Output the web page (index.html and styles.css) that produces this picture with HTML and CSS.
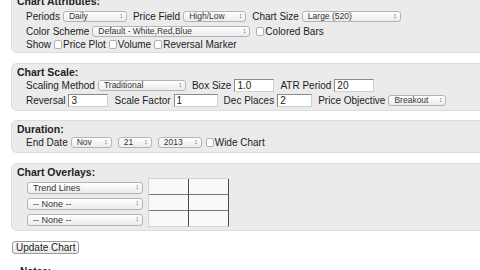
FILE: index.html
```html
<html>
    <head>
        <link rel="stylesheet" href="styles.css">
    </head>
    <body>
        <div id="page">
            <div class="box first">
                <h3>Chart Attributes:</h3>
                <div class="row">
                    <label>Periods</label>
                    <span class="sel w64"><select><option>Daily</option></select></span>
                    <label>Price Field</label>
                    <span class="sel w63"><select><option>High/Low</option></select></span>
                    <label>Chart Size</label>
                    <span class="sel w99"><select><option>Large (520)</option></select></span>
                </div>
                <div class="row">
                    <label>Color Scheme</label>
                    <span class="sel w158"><select><option>Default - White,Red,Blue</option></select></span>
                    <span class="chk"></span><label>Colored Bars</label>
                </div>
                <div class="row short">
                    <label>Show</label>
                    <span class="chk"></span><label>Price Plot</label>
                    <span class="chk"></span><label>Volume</label>
                    <span class="chk"></span><label>Reversal Marker</label>
                </div>
            </div>

            <div class="box">
                <h3>Chart Scale:</h3>
                <div class="row">
                    <label>Scaling Method</label>
                    <span class="sel w88"><select><option>Traditional</option></select></span>
                    <label>Box Size</label>
                    <input class="txt w40" type="text" value="1.0">
                    <label>ATR Period</label>
                    <input class="txt w40" type="text" value="20">
                </div>
                <div class="row">
                    <label>Reversal</label>
                    <input class="txt w40" type="text" value="3">
                    <label>Scale Factor</label>
                    <input class="txt w44" type="text" value="1">
                    <label>Dec Places</label>
                    <input class="txt w35" type="text" value="2">
                    <label>Price Objective</label>
                    <span class="sel w58"><select><option>Breakout</option></select></span>
                </div>
            </div>

            <div class="box spaced">
                <h3>Duration:</h3>
                <div class="row">
                    <label>End Date</label>
                    <span class="sel w41"><select><option>Nov</option></select></span>
                    <span class="sel w34"><select><option>21</option></select></span>
                    <span class="sel w44 tight"><select><option>2013</option></select></span>
                    <span class="chk"></span><label>Wide Chart</label>
                </div>
            </div>

            <div class="box">
                <h3>Chart Overlays:</h3>
                <div class="overlays">
                    <div class="ov-list">
                        <div class="ov-row"><span class="sel w116"><select><option>Trend Lines</option></select></span></div>
                        <div class="ov-row"><span class="sel w116"><select><option>-- None --</option></select></span></div>
                        <div class="ov-row"><span class="sel w116"><select><option>-- None --</option></select></span></div>
                    </div>
                    <div class="ov-grid">
                        <input type="text"><input type="text">
                        <input type="text"><input type="text">
                        <input type="text"><input type="text">
                    </div>
                </div>
            </div>

            <button class="update">Update Chart</button>
            <h4 class="notes">Notes:</h4>
        </div>
    </body>
</html>
```

FILE: styles.css
```css
body{
    margin: 0;
    background: #fff;
    overflow: hidden;
    font-family: "Liberation Sans", Arial, sans-serif;
    font-size: 10px;
    color: #222;
}
#page{
    padding-left: 11px;
    width: 620px;
}
.box{
    background: #ebebeb;
    border: solid 1px #dcdcdc;
    border-radius: 6px;
    padding: 2px 5px 2px;
    margin-bottom: 9px;
}
.box.first{
    margin-top: -8px;
    margin-bottom: 10px;
}
.box.spaced{
    margin-bottom: 10px;
}
.box.first h3{
    margin-bottom: 2px;
}
.box h3{
    margin: 0;
    font-size: 10.5px;
    line-height: 12px;
    font-weight: bold;
    color: #222;
}
.row{
    display: flex;
    align-items: center;
    height: 15px;
    padding-left: 9px;
}
.row.short{
    height: 11px;
}
.row label{
    margin-right: 3px;
    white-space: nowrap;
}
.sel{
    position: relative;
    display: inline-block;
    height: 11px;
    box-sizing: border-box;
    border: solid 1px #b4b4b4;
    border-radius: 3px;
    background: linear-gradient(#ffffff, #ececec);
    margin-right: 6px;
}
.sel select{
    -webkit-appearance: none;
    appearance: none;
    display: block;
    width: 100%;
    height: 9px;
    border: none;
    background: transparent;
    font-family: "Liberation Sans", Arial, sans-serif;
    font-size: 8.5px;
    line-height: 9px;
    padding: 0 0 0 5px;
    margin: 0;
    color: #333;
}
.sel::after{
    content: "\2195";
    position: absolute;
    right: 3px;
    top: -1px;
    font-size: 7px;
    line-height: 10px;
    color: #555;
}
.sel.tight{
    margin-right: 4px;
}
.w34{ width: 34px; }
.w41{ width: 41px; }
.w44{ width: 44px; }
.w58{ width: 58px; }
.w63{ width: 63px; }
.w64{ width: 64px; }
.w88{ width: 88px; }
.w99{ width: 99px; }
.w116{ width: 116px; }
.w158{ width: 158px; }
.txt{
    height: 13px;
    box-sizing: border-box;
    border: solid 1px;
    border-color: #8a8a8a #cfcfcf #cfcfcf #8a8a8a;
    background: #fff;
    font-family: "Liberation Sans", Arial, sans-serif;
    font-size: 10px;
    padding: 0 2px;
    margin-right: 6px;
    color: #222;
}
.txt.w35{ width: 35px; }
.txt.w40{ width: 40px; }
.txt.w44{ width: 44px; }
.chk{
    display: inline-block;
    width: 8px;
    height: 9px;
    box-sizing: border-box;
    border: solid 1px #b0b0b0;
    border-radius: 2px;
    background: #fff;
    margin-right: 1px;
}
.overlays{
    display: flex;
    padding-left: 10px;
}
.ov-list{
    display: flex;
    flex-direction: column;
    padding-top: 2px;
    margin-right: 5px;
}
.ov-row{
    height: 16px;
    display: flex;
    align-items: center;
}
.ov-row .sel{
    height: 12px;
    margin-right: 0;
}
.ov-row .sel select{
    height: 10px;
    line-height: 10px;
    font-size: 9px;
}
.ov-grid{
    display: grid;
    grid-template-columns: 40px 40px;
    grid-auto-rows: 16px;
    border-top: solid 1px #d4d4d4;
    border-left: solid 1px #d4d4d4;
}
.ov-grid input{
    width: 40px;
    height: 16px;
    box-sizing: border-box;
    border: none;
    border-right: solid 1px #4a4a4a;
    border-bottom: solid 1px #7a7a7a;
    background: #f9f9f9;
    margin: 0;
}
.ov-grid input:nth-last-child(-n+2){
    border-bottom-color: #d4d4d4;
}
.update{
    display: block;
    margin: 10px 0 0 1px;
    height: 13px;
    padding: 0 3px;
    border: solid 1px #9a9a9a;
    border-radius: 3px;
    background: linear-gradient(#ffffff, #e8e8e8);
    font-family: "Liberation Sans", Arial, sans-serif;
    font-size: 10px;
    line-height: 11px;
    color: #222;
}
.notes{
    margin: 12px 0 0 9px;
    font-size: 10px;
    line-height: 12px;
    font-weight: bold;
}
```
